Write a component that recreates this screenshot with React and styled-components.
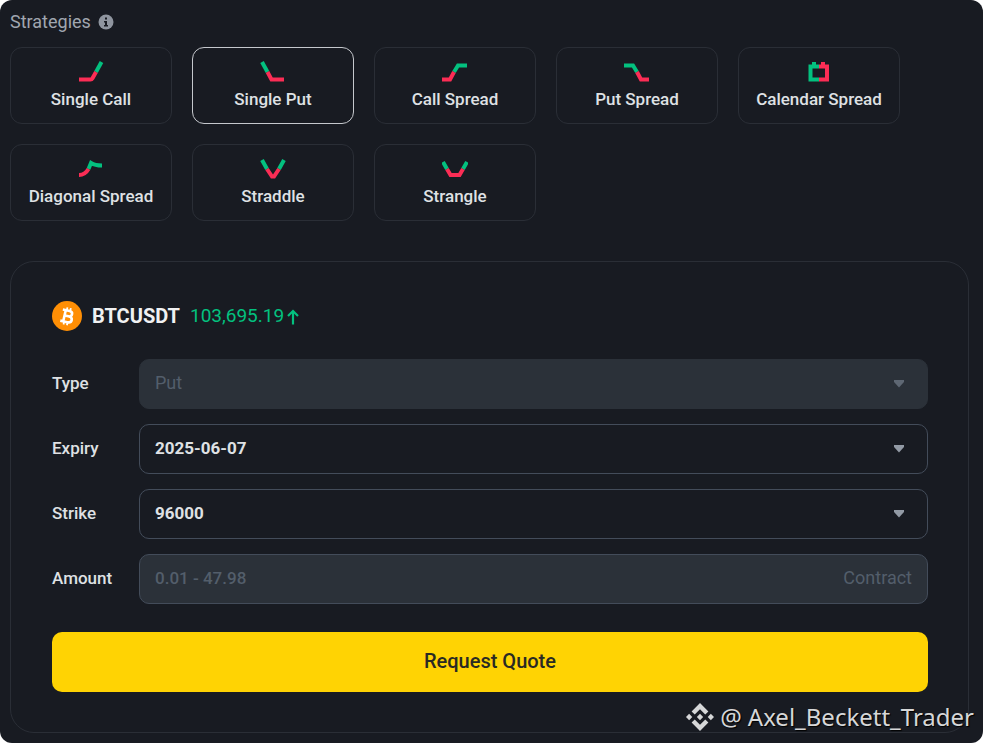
import styled, { createGlobalStyle } from 'styled-components';
import { useState } from 'react';

const bgColor = '#181b22';
const lineColor = '#2a2e36';
const fieldColor = '#2b3139';
const fieldLine = '#434c5a';
const textColor = '#dfe1e4';
const mutedColor = '#8f959f';
const disabledColor = '#535e6b';
const green = '#03c17f';
const red = '#fb2d55';
const yellow = '#ffd303';

const strategies = [
	{
		name: 'Single Call',
		up: 'M18 11 L23.5 1',
		down: 'M1 18.5 H12.5 Q13.8 18.5 14.5 17.2 L18 11',
	},
	{
		name: 'Single Put',
		up: 'M2 1 L7.5 11',
		down: 'M7.5 11 L11.5 18.5 H24',
	},
	{
		name: 'Call Spread',
		up: 'M12 11 L16 4.5 H25',
		down: 'M0 18.5 H8 L12 11',
	},
	{
		name: 'Put Spread',
		up: 'M0 4.5 H9 L13 11',
		down: 'M13 11 L17 18.5 H25',
	},
	{
		name: 'Calendar Spread',
		up: 'M13 18.5 H4.5 V5.5 H13 M8 1 V5',
		down: 'M13 18.5 H21 V5.5 H13 M17 1 V5',
	},
	{
		name: 'Diagonal Spread',
		up: 'M10.5 11 L13 5 Q17 7.5 24 7.5',
		down: 'M1 17 Q7 17 10.5 11',
	},
	{
		name: 'Straddle',
		up: 'M2 2 L7 11 M24 2 L19 11',
		down: 'M7 11 L12 18.5 H14 L19 11',
	},
	{
		name: 'Strangle',
		up: 'M1 4 L5 11 M25 4 L21 11',
		down: 'M5 11 L8.5 17 H17.5 L21 11',
	},
];

export default function App() {
	const [selected, setSelected] = useState('Single Put');

	return (
		<>
			<GlobalStyle />
			<Page>
				<Title>
					Strategies
					<InfoIcon />
				</Title>
				<StrategyList>
					{strategies.map(({ name, up, down }) => (
						<StrategyButton
							key={name}
							type='button'
							aria-pressed={selected === name}
							$active={selected === name}
							onClick={() => setSelected(name)}
						>
							<StrategyIcon viewBox='0 0 26 22' aria-hidden='true'>
								<path d={up} stroke={green} />
								<path d={down} stroke={red} />
							</StrategyIcon>
							{name}
						</StrategyButton>
					))}
				</StrategyList>
				<QuoteForm onSubmit={(e) => e.preventDefault()}>
					<Pair>
						<BitcoinIcon />
						<Symbol>BTCUSDT</Symbol>
						<Price>
							103,695.19
							<ArrowIcon />
						</Price>
					</Pair>
					<Fields>
						<SelectField id='type' label='Type' value='Put' disabled />
						<SelectField id='expiry' label='Expiry' value='2025-06-07' />
						<SelectField id='strike' label='Strike' value='96000' />
						<Row>
							<Label htmlFor='amount'>Amount</Label>
							<Box $filled $outlined>
								<AmountInput id='amount' type='text' placeholder='0.01 - 47.98' />
								<Unit>Contract</Unit>
							</Box>
						</Row>
					</Fields>
					<SubmitButton type='submit'>Request Quote</SubmitButton>
				</QuoteForm>
				<Watermark>
					<BinanceIcon />
					<span>@</span>
					<span>Axel_Beckett_Trader</span>
				</Watermark>
			</Page>
		</>
	);
}

function SelectField({ id, label, value, disabled }) {
	return (
		<Row>
			<Label htmlFor={id}>{label}</Label>
			<Box $filled={disabled} $outlined={!disabled}>
				<Select id={id} disabled={disabled} defaultValue={value}>
					<option>{value}</option>
				</Select>
				<Caret viewBox='0 0 12 8' $dim={disabled} aria-hidden='true'>
					<path d='M1 0 H11 V2 L6 7.5 L1 2 Z' />
				</Caret>
			</Box>
		</Row>
	);
}

function InfoIcon() {
	return (
		<svg width='16' height='16' viewBox='0 0 16 16' aria-hidden='true'>
			<circle cx='8' cy='8' r='7.5' fill={mutedColor} />
			<path d='M7 3.5h2v2H7z M6 7h3v4h1v1.5H6V11h1V8.5H6z' fill={bgColor} />
		</svg>
	);
}

function BitcoinIcon() {
	return (
		<svg width='30' height='30' viewBox='0 0 30 30' aria-hidden='true'>
			<circle cx='15' cy='15' r='15' fill='#ff8f05' />
			<g transform='rotate(13 15 15)' fill='none' stroke='#fff'>
				<path
					d='M9.5 9.5H16.5Q19.5 9.5 19.5 12.2Q19.5 15 16.5 15H12.5M16.5 15Q20.5 15 20.5 18Q20.5 21 16.5 21H9.5M12.5 9.5V21'
					strokeWidth='2.6'
				/>
				<path d='M13.5 6.5V9.5M17 6.5V9.5M13.5 21V24M17 21V24' strokeWidth='1.8' />
			</g>
		</svg>
	);
}

function ArrowIcon() {
	return (
		<svg width='14' height='18' viewBox='0 0 14 18' fill='none' aria-hidden='true'>
			<path d='M7 17.5V4M2 9L7 4L12 9' stroke={green} strokeWidth='2.2' />
		</svg>
	);
}

function BinanceIcon() {
	return (
		<svg width='28' height='28' viewBox='0 0 24 24' fill='currentColor' aria-hidden='true'>
			<path d='M12 0 L19.2 7.2 L16.5 9.9 L12 5.4 L7.5 9.9 L4.8 7.2 Z' />
			<path d='M12 24 L19.2 16.8 L16.5 14.1 L12 18.6 L7.5 14.1 L4.8 16.8 Z' />
			<path d='M2.7 9.3 L5.4 12 L2.7 14.7 L0 12 Z' />
			<path d='M21.3 9.3 L24 12 L21.3 14.7 L18.6 12 Z' />
			<path d='M12 9.3 L14.7 12 L12 14.7 L9.3 12 Z' />
		</svg>
	);
}

const GlobalStyle = createGlobalStyle`
	* {
		box-sizing: border-box;
	}
	body {
		margin: 0;
		background-color: #fff;
		color: ${textColor};
		font-family: Roboto, 'Liberation Sans', sans-serif;
		font-size: 17px;
		line-height: 24px;
	}
	button,
	input,
	select {
		font: inherit;
		color: inherit;
	}
`;

const Page = styled.main`
	position: relative;
	min-height: 100vh;
	padding: 10px 14px 10px 10px;
	border-radius: 12px;
	background-color: ${bgColor};
`;

const Title = styled.h1`
	display: flex;
	align-items: center;
	gap: 7px;
	margin: 0 0 13px;
	color: #a0a6b0;
	font-size: 18px;
	font-weight: 400;
`;

const StrategyList = styled.div`
	display: grid;
	grid-template-columns: repeat(auto-fill, 162px);
	gap: 20px;
`;

const StrategyButton = styled.button`
	display: flex;
	flex-direction: column;
	align-items: center;
	justify-content: center;
	gap: 4px;
	height: 77px;
	padding: 0;
	border: 1px solid ${(props) => (props.$active ? '#c5c8cd' : lineColor)};
	border-radius: 12px;
	background-color: transparent;
	font-weight: 500;
	white-space: nowrap;
	cursor: pointer;
`;

const StrategyIcon = styled.svg`
	width: 26px;
	height: 22px;
	fill: none;
	stroke-width: 4;
`;

const QuoteForm = styled.form`
	display: flex;
	flex-direction: column;
	margin-top: 40px;
	padding: 39px 40px 40px 41px;
	border: 1px solid ${lineColor};
	border-radius: 24px;
`;

const Pair = styled.div`
	display: flex;
	align-items: center;
	margin-bottom: 28px;
`;

const Symbol = styled.strong`
	margin: 0 10px;
	color: #f0f1f2;
	font-size: 20px;
	font-weight: 700;
`;

const Price = styled.span`
	display: flex;
	align-items: center;
	gap: 2px;
	color: ${green};
	font-size: 19px;
`;

const Fields = styled.div`
	display: grid;
	gap: 15px;
	margin-bottom: 28px;
`;

const Row = styled.div`
	display: grid;
	grid-template-columns: 87px 1fr;
	align-items: center;
`;

const Label = styled.label`
	padding-bottom: 2px;
	font-weight: 500;
`;

const Box = styled.div`
	display: flex;
	align-items: center;
	height: 50px;
	padding-right: 15px;
	border: 1px solid ${(props) => (props.$outlined ? fieldLine : fieldColor)};
	border-radius: 10px;
	background-color: ${(props) => (props.$filled ? fieldColor : 'transparent')};
`;

const Select = styled.select`
	flex: 1;
	height: 100%;
	margin-right: -27px;
	padding: 0 40px 2px 15px;
	border: none;
	outline: none;
	appearance: none;
	background-color: transparent;
	font-weight: 700;
	cursor: pointer;
	&:disabled {
		color: ${disabledColor};
		font-size: 18px;
		font-weight: 400;
		opacity: 1;
		cursor: default;
	}
	option {
		background-color: ${bgColor};
	}
`;

const Caret = styled.svg`
	width: 12px;
	height: 8px;
	margin-right: 7px;
	fill: ${(props) => (props.$dim ? '#5e6773' : '#929aa5')};
	pointer-events: none;
`;

const AmountInput = styled.input`
	flex: 1;
	min-width: 0;
	height: 100%;
	padding: 0 15px 2px;
	border: none;
	outline: none;
	background-color: transparent;
	font-weight: 500;
	&::placeholder {
		color: ${disabledColor};
		opacity: 1;
	}
`;

const Unit = styled.span`
	padding-bottom: 2px;
	color: ${disabledColor};
	font-size: 18px;
`;

const SubmitButton = styled.button`
	height: 60px;
	padding: 0 0 3px;
	border: none;
	border-radius: 10px;
	background-color: ${yellow};
	color: #292a24;
	font-size: 20px;
	font-weight: 500;
	cursor: pointer;
`;

const Watermark = styled.div`
	position: absolute;
	right: 9px;
	bottom: 9px;
	display: flex;
	align-items: center;
	gap: 6px;
	color: #d6d7d8;
	font-family: 'Noto Sans', 'Open Sans', sans-serif;
	font-size: 24px;
	line-height: 34px;
	text-shadow: 1px 1px 1px #000;
`;
